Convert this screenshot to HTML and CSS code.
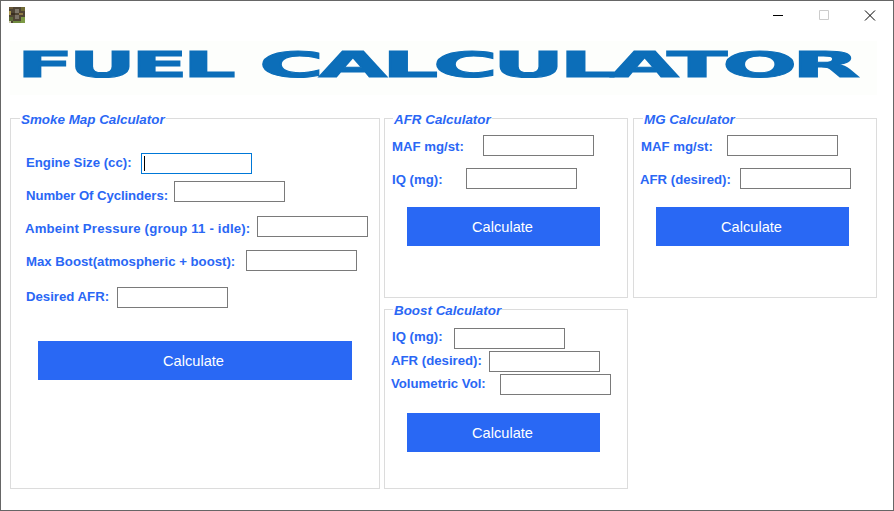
FILE: index.html
```html
<!DOCTYPE html>
<html lang="en">
<head>
	<meta charset="UTF-8">
	<title>Fuel Calculator</title>
	<link rel="stylesheet" href="styles.css">
</head>
<body>
	<div class="window">
		<div class="titlebar">
			<svg class="app-icon" width="16" height="16" viewBox="0 0 8 8" shape-rendering="crispEdges">
				<rect width="8" height="8" fill="#4f4434"/>
				<rect x="0" y="0" width="2" height="1" fill="#6b5a3a"/>
				<rect x="3" y="1" width="2" height="2" fill="#7f776a"/>
				<rect x="6" y="0" width="2" height="2" fill="#6f6a35"/>
				<rect x="0" y="2" width="1" height="2" fill="#a8964e"/>
				<rect x="1" y="3" width="2" height="1" fill="#3a2e22"/>
				<rect x="5" y="3" width="2" height="1" fill="#8f7a48"/>
				<rect x="3" y="4" width="2" height="2" fill="#7b7267"/>
				<rect x="0" y="5" width="2" height="2" fill="#5c6b36"/>
				<rect x="6" y="5" width="2" height="3" fill="#7d9a45"/>
				<rect x="2" y="7" width="4" height="1" fill="#6f8a3e"/>
				<rect x="0" y="7" width="1" height="1" fill="#c9c6a8"/>
			</svg>
			<div class="controls">
				<svg width="46" height="30" viewBox="0 0 46 30"><path d="M18 14.500h10" stroke="#000"/></svg>
				<svg width="46" height="30" viewBox="0 0 46 30"><path d="M18.500 9.500h9v9h-9z" fill="none" stroke="#ccc"/></svg>
				<svg width="46" height="30" viewBox="0 0 46 30"><path d="M18 9.500l10 10M28 9.500l-10 10" stroke="#000" fill="none"/></svg>
			</div>
		</div>

		<div class="logo">
			<svg width="867" height="54" viewBox="0 0 867 54">
				<text class="logo-text" x="7" y="36" textLength="214" lengthAdjust="spacingAndGlyphs">FUEL</text>
				<text class="logo-text" x="249" y="36" textLength="596" lengthAdjust="spacingAndGlyphs">CALCULATOR</text>
			</svg>
		</div>

		<div class="panels">
			<section class="panel smoke">
				<h2 class="panel-title">Smoke Map Calculator</h2>
				<div class="field f-engine"><label>Engine Size (cc):</label><input class="focused" type="text"></div>
				<div class="field f-number"><label>Number Of Cyclinders:</label><input type="text"></div>
				<div class="field f-ambient"><label>Ambeint Pressure (group 11 - idle):</label><input type="text"></div>
				<div class="field f-boost"><label>Max Boost(atmospheric + boost):</label><input type="text"></div>
				<div class="field f-desired"><label>Desired AFR:</label><input type="text"></div>
				<button class="calc" type="button">Calculate</button>
			</section>

			<section class="panel afr">
				<h2 class="panel-title">AFR Calculator</h2>
				<div class="field f-maf"><label>MAF mg/st:</label><input type="text"></div>
				<div class="field f-iq"><label>IQ (mg):</label><input type="text"></div>
				<button class="calc" type="button">Calculate</button>
			</section>

			<section class="panel mg">
				<h2 class="panel-title">MG Calculator</h2>
				<div class="field f-maf"><label>MAF mg/st:</label><input type="text"></div>
				<div class="field f-afr"><label>AFR (desired):</label><input type="text"></div>
				<button class="calc" type="button">Calculate</button>
			</section>

			<section class="panel bst">
				<h2 class="panel-title">Boost Calculator</h2>
				<div class="field f-iq"><label>IQ (mg):</label><input type="text"></div>
				<div class="field f-afr"><label>AFR (desired):</label><input type="text"></div>
				<div class="field f-vol"><label>Volumetric Vol:</label><input type="text"></div>
				<button class="calc" type="button">Calculate</button>
			</section>
		</div>
	</div>
</body>
</html>
```

FILE: styles.css
```css
html,
body{
	margin: 0;
	padding: 0;
	background-color: #fff;
}
.window{
	width: 894px;
	height: 511px;
	box-sizing: border-box;
	border: 1px solid #666;
	overflow: hidden;
	font-family: "Liberation Sans", Arial, sans-serif;
}
.titlebar{
	height: 30px;
	display: flex;
	align-items: flex-start;
	justify-content: space-between;
}
.app-icon{
	margin: 6px 0 0 8px;
}
.controls{
	display: flex;
}
.controls svg{
	display: block;
}
.logo{
	width: 867px;
	height: 54px;
	margin: 10px 0 0 9px;
	background-color: #fdfefc;
}
.logo svg{
	display: block;
}
.logo-text{
	font-family: "DejaVu Sans", sans-serif;
	font-weight: 700;
	font-size: 35px;
	letter-spacing: -2px;
	fill: #0c6eb9;
	stroke: #0c6eb9;
	stroke-width: 1px;
}
.panels{
	display: grid;
	grid-template-columns: 370px 244px 245px;
	grid-template-rows: 180px 180px;
	column-gap: 4px;
	row-gap: 11px;
	margin: 23px 0 0 9px;
}
.panel{
	position: relative;
	box-sizing: border-box;
	border: 1px solid #dcdcdc;
	min-width: 0;
}
.smoke{
	grid-row: 1 / 3;
	padding: 34px 0 0 15px;
}
.afr{
	padding: 16px 0 0 7px;
}
.mg{
	margin-left: 1px;
	padding: 16px 0 0 7px;
}
.bst{
	padding: 18px 0 0 7px;
}
.panel-title{
	position: absolute;
	top: -6px;
	left: 9px;
	margin: 0;
	padding: 0 1px;
	background-color: #fff;
	color: #2a67f5;
	font-size: 13.4px;
	line-height: 14px;
	font-weight: 700;
	font-style: italic;
	white-space: nowrap;
}
.afr .panel-title{
	left: 8px;
}
.bst .panel-title{
	left: 8px;
}
.field{
	display: flex;
	align-items: flex-start;
}
.field label{
	flex: none;
	color: #2a67f5;
	font-size: 13.2px;
	line-height: 14px;
	font-weight: 700;
	white-space: nowrap;
}
.field input{
	flex: none;
	width: 111px;
	height: 21px;
	box-sizing: border-box;
	margin: 0;
	padding: 0;
	border: 1px solid #7a7a7a;
	border-radius: 0;
	outline: none;
	background-color: #fff;
}
.field input.focused{
	border-color: #0078d7;
	background: linear-gradient(#000, #000) 2px 2px / 1px 15px no-repeat #fff;
}

/* smoke map rows */
.f-engine label{
	width: 115px;
	margin-top: 3px;
}
.f-number{
	margin-top: 7px;
}
.f-number label{
	width: 148px;
	margin-top: 8px;
	letter-spacing: -0.08px;
}
.f-ambient{
	margin: 13px 0 0 -1px;
}
.f-ambient label{
	width: 232px;
	margin-top: 6px;
	letter-spacing: 0.18px;
}
.f-boost{
	margin-top: 13px;
}
.f-boost label{
	width: 220px;
	margin-top: 5px;
}
.f-desired{
	margin-top: 16px;
}
.f-desired label{
	width: 91px;
	margin-top: 3px;
}

/* afr rows */
.afr .f-maf label{
	width: 91px;
	margin-top: 5px;
}
.afr .f-iq{
	margin-top: 12px;
}
.afr .f-iq label{
	width: 74px;
	margin-top: 5px;
}

/* mg rows */
.mg .f-maf label{
	width: 86px;
	margin-top: 5px;
}
.mg .f-afr{
	margin: 12px 0 0 -1px;
}
.mg .f-afr label{
	width: 100px;
	margin-top: 5px;
}

/* boost rows */
.bst .f-iq label{
	width: 62px;
	margin-top: 2px;
}
.bst .f-afr{
	margin: 2px 0 0 -1px;
}
.bst .f-afr label{
	width: 98px;
	margin-top: 3px;
}
.bst .f-vol{
	margin: 2px 0 0 -1px;
}
.bst .f-vol label{
	width: 109px;
	margin-top: 3px;
}

.calc{
	display: block;
	width: 193px;
	height: 39px;
	margin: 18px 0 0 15px;
	padding: 0 2px 0 0;
	border: none;
	border-radius: 0;
	background-color: #2968f4;
	color: #fff;
	font-family: "Liberation Sans", Arial, sans-serif;
	font-size: 14.6px;
}
.smoke .calc{
	width: 314px;
	margin: 33px 0 0 12px;
	padding-right: 3px;
}
```
